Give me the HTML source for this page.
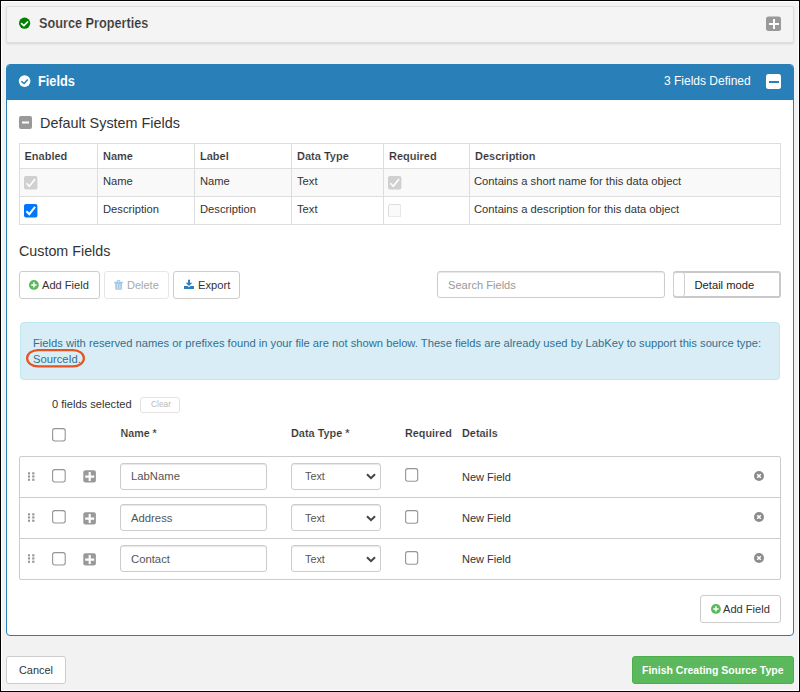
<!DOCTYPE html>
<html><head><meta charset="utf-8">
<style>
*{box-sizing:border-box}
html,body{margin:0;padding:0}
body{width:800px;height:692px;position:relative;overflow:hidden;background:#000;font-family:"Liberation Sans",sans-serif;color:#333}
.frame{position:absolute;left:1px;top:1px;width:798px;height:690px;background:#fff}
.page{position:absolute;left:2px;top:2px;width:796px;height:688px;background:#f2f2f2}
.a{position:absolute}
.t{position:absolute;white-space:nowrap;line-height:1}
.panel1{left:6px;top:6px;width:788px;height:37px;background:#f4f4f4;border:1px solid #dedede;border-radius:2px;box-shadow:0 1px 2px rgba(0,0,0,.12)}
.panel2{left:6px;top:64px;width:788px;height:572px;background:#fff;border:1px solid #2980b9;border-radius:4px;overflow:hidden}
.phead{position:absolute;left:0;top:0;width:100%;height:35px;background:#2980b9}
.tbl{left:19px;top:143px;width:762px;height:82px;border:1px solid #ddd}
.hl{position:absolute;height:1px;background:#ddd}
.vl{position:absolute;width:1px;background:#ddd}
.btn{position:absolute;background:#fff;border:1px solid #ccc;border-radius:3px}
.inp{position:absolute;background:#fff;border:1px solid #ccc;border-radius:3px;box-shadow:inset 0 1px 1px rgba(0,0,0,.1)}

</style></head><body>
<div class="frame"></div><div class="page"></div>
<div class="a panel1"></div>
<svg class="a" style="left:18px;top:17px" width="14" height="14" viewBox="0 0 14 14"><circle cx="6.6" cy="6.2" r="5.6" fill="#008000"/><path d="M3 6.2 L5.9 8.7 L10 4.5" stroke="#fff" stroke-width="1.7" fill="none"/></svg>
<div id="t_srcprop" class="t" style="left:39px;top:17px;font-size:12.7px;transform:scaleY(1.1);transform-origin:0 0;font-weight:bold;-webkit-text-stroke:0.18px #f4f4f4">Source Properties</div>
<svg class="a" style="left:766px;top:16px" width="15" height="15" viewBox="0 0 15 15"><rect x="0" y="0.5" width="15" height="14.5" rx="2.5" fill="#999"/><path d="M8 3 V13 M3 8 H13" stroke="#fff" stroke-width="2"/></svg>
<div class="a panel2"><div class="phead"></div></div>
<svg class="a" style="left:18px;top:75px" width="14" height="14" viewBox="0 0 14 14"><circle cx="6.6" cy="6.1" r="5.85" fill="#fff"/><path d="M3.3 6.3 L6.2 8.5 L9.7 4.5" stroke="#2980b9" stroke-width="1.5" fill="none"/></svg>
<div id="t_fields" class="t" style="left:38px;top:75.3px;font-size:12.8px;transform:scaleY(1.11);transform-origin:0 0;font-weight:bold;color:#fff">Fields</div>
<div id="t_3fields" class="t" style="left:664px;top:75px;font-size:12px;color:#fff">3 Fields Defined</div>
<svg class="a" style="left:766px;top:74px" width="15" height="15" viewBox="0 0 15 15"><rect x="0" y="0" width="15" height="15" rx="2.5" fill="#fff"/><path d="M3 8 H13" stroke="#2980b9" stroke-width="2"/></svg>
<svg class="a" style="left:19px;top:116px" width="13" height="13" viewBox="0 0 13 13"><rect x="0" y="0" width="13" height="13" rx="2" fill="#999"/><path d="M3 6.5 H10" stroke="#fff" stroke-width="2"/></svg>
<div id="t_dsf" class="t" style="left:40px;top:116px;font-size:14.4px">Default System Fields</div>
<div class="a tbl"></div>
<div class="a" style="left:20px;top:169px;width:760px;height:27px;background:#f9f9f9"></div>
<div class="hl" style="left:20px;top:168px;width:760px"></div>
<div class="hl" style="left:20px;top:196px;width:760px"></div>
<div class="vl" style="left:97px;top:144px;height:80px"></div>
<div class="vl" style="left:194px;top:144px;height:80px"></div>
<div class="vl" style="left:291px;top:144px;height:80px"></div>
<div class="vl" style="left:383px;top:144px;height:80px"></div>
<div class="vl" style="left:469px;top:144px;height:80px"></div>
<div id="t_h_en" class="t" style="left:24.5px;top:151px;font-size:11.0px;font-weight:bold;-webkit-text-stroke:0.15px #fff">Enabled</div>
<div id="t_h_name" class="t" style="left:103px;top:151px;font-size:11.0px;font-weight:bold;-webkit-text-stroke:0.15px #fff">Name</div>
<div id="t_h_label" class="t" style="left:200px;top:151px;font-size:11.0px;font-weight:bold;-webkit-text-stroke:0.15px #fff">Label</div>
<div id="t_h_dt" class="t" style="left:297px;top:151px;font-size:11.0px;font-weight:bold;-webkit-text-stroke:0.15px #fff">Data Type</div>
<div id="t_h_req" class="t" style="left:389px;top:151px;font-size:11.0px;font-weight:bold;-webkit-text-stroke:0.15px #fff">Required</div>
<div id="t_h_desc" class="t" style="left:475px;top:151px;font-size:11.0px;font-weight:bold;-webkit-text-stroke:0.15px #fff">Description</div>
<div id="t_r1_name" class="t" style="left:103px;top:176px;font-size:11.2px">Name</div>
<div id="t_r1_label" class="t" style="left:200px;top:176px;font-size:11.2px">Name</div>
<div id="t_r1_dt" class="t" style="left:297px;top:176px;font-size:11.2px">Text</div>
<div id="t_r1_desc" class="t" style="left:474px;top:176px;font-size:11.2px">Contains a short name for this data object</div>
<div id="t_r2_name" class="t" style="left:103px;top:204px;font-size:11.2px">Description</div>
<div id="t_r2_label" class="t" style="left:200px;top:204px;font-size:11.2px">Description</div>
<div id="t_r2_dt" class="t" style="left:297px;top:204px;font-size:11.2px">Text</div>
<div id="t_r2_desc" class="t" style="left:474px;top:204px;font-size:11.2px">Contains a description for this data object</div>
<svg class="a" style="left:24px;top:176px" width="14" height="14" viewBox="0 0 14 14"><rect x="0" y="0" width="13.4" height="13.5" rx="2" fill="#d0d0d0"/><path d="M2.4 7.2 L5.3 10.2 L11.1 2.9" stroke="#fff" stroke-width="1.6" fill="none"/></svg>
<svg class="a" style="left:24px;top:204px" width="14" height="14" viewBox="0 0 14 14"><rect x="0" y="0" width="13.4" height="13.6" rx="2" fill="#0075ff"/><path d="M2.4 7.2 L5.3 10.2 L11.1 2.9" stroke="#fff" stroke-width="2" fill="none"/></svg>
<svg class="a" style="left:388px;top:176px" width="14" height="14" viewBox="0 0 14 14"><rect x="0" y="0" width="13.4" height="13.5" rx="2" fill="#d0d0d0"/><path d="M2.4 7.2 L5.3 10.2 L11.1 2.9" stroke="#fff" stroke-width="1.6" fill="none"/></svg>
<svg class="a" style="left:388px;top:204px" width="13" height="13" viewBox="0 0 13 13"><rect x="0.5" y="0.5" width="12.4" height="12.5" rx="2" fill="#fafafa" stroke="#dcdcdc"/></svg>
<div id="t_cf" class="t" style="left:19px;top:244px;font-size:14.3px">Custom Fields</div>
<div class="btn" style="left:19px;top:271px;width:81px;height:28px"></div>
<svg class="a" style="left:29.4px;top:280px" width="11" height="11" viewBox="0 0 11 11"><circle cx="4.9" cy="4.95" r="4.9" fill="#5cb85c"/><path d="M4.9 2.3 V7.6 M2.2 4.95 H7.6" stroke="#fff" stroke-width="1.5"/></svg>
<div id="t_addf" class="t" style="left:42px;top:280px;font-size:11.1px">Add Field</div>
<div class="btn" style="left:104px;top:271px;width:65px;height:28px;border-color:#e6e6e6"></div>
<svg class="a" style="left:114px;top:280px" width="10" height="10" viewBox="0 0 10 10"><path d="M3.2 2 V0.6 H5.8 V2" stroke="#a3c7e6" stroke-width="1" fill="none"/><rect x="0.2" y="1.8" width="8.8" height="1.3" fill="#a3c7e6"/><path d="M1.1 3.1 H8.1 L7.8 9.8 H1.4 Z" fill="#a3c7e6"/><path d="M3.3 4 V8.8 M5.9 4 V8.8" stroke="#e9f2fa" stroke-width="0.8"/></svg>
<div id="t_del" class="t" style="left:127px;top:280px;font-size:11px;color:#a8a8a8">Delete</div>
<div class="btn" style="left:173px;top:271px;width:67px;height:28px"></div>
<svg class="a" style="left:184px;top:279px" width="10" height="10" viewBox="0 0 10 10"><rect x="4" y="0.7" width="2" height="3.6" fill="#2a7fc1"/><path d="M1.6 3.8 H8.4 L5 7 Z" fill="#2a7fc1"/><path d="M0 7 H3.6 L5 8.2 L6.4 7 H10 V10 H0 Z" fill="#2a7fc1"/></svg>
<div id="t_exp" class="t" style="left:198px;top:280px;font-size:11.2px">Export</div>
<div class="inp" style="left:437px;top:271px;width:228px;height:27px"></div>
<div id="t_search" class="t" style="left:448px;top:280px;font-size:11.1px;color:#999">Search Fields</div>
<div class="a" style="left:673px;top:271px;width:108px;height:27px;border:2px solid #c9c9c9;border-left-width:1px;border-radius:3px;background:#fff"></div>
<div class="a" style="left:673px;top:272px;width:12px;height:25px;border:1px solid #cfcfcf;border-radius:3px;background:#fff"></div>
<div id="t_detail" class="t" style="left:694.5px;top:280px;font-size:11.2px;color:#222">Detail mode</div>
<div class="a" style="left:20px;top:322px;width:760px;height:58px;background:#d9edf7;border:1px solid #bce8f1;border-radius:4px"></div>
<div id="t_al1" class="t" style="left:33px;top:338px;font-size:11.2px;color:#31708f">Fields with reserved names or prefixes found in your file are not shown below. These fields are already used by LabKey to support this source type:</div>
<div id="t_al2" class="t" style="left:33px;top:354px;font-size:11.2px;color:#31708f">SourceId.</div>
<svg class="a" style="left:25px;top:348px" width="62" height="21" viewBox="0 0 62 21"><rect x="2.1" y="2.1" width="56.8" height="16.3" rx="11" ry="8.1" fill="none" stroke="#e5541e" stroke-width="2.2"/></svg>
<div id="t_sel" class="t" style="left:52px;top:399px;font-size:11.1px">0 fields selected</div>
<div class="btn" style="left:140px;top:397px;width:40px;height:16px;border-color:#e3e3e3"></div>
<div id="t_clear" class="t" style="left:151px;top:400px;font-size:8.4px;color:#bbb">Clear</div>
<svg class="a" style="left:52px;top:428px" width="15" height="15" viewBox="0 0 15 15"><rect x="0.6" y="0.6" width="12.6" height="12.4" rx="2.2" fill="#fff" stroke="#959595" stroke-width="1.1"/></svg>
<div id="t_fh_name" class="t" style="left:120.5px;top:428px;font-size:10.7px;font-weight:bold;-webkit-text-stroke:0.15px #fff">Name *</div>
<div id="t_fh_dt" class="t" style="left:291px;top:428px;font-size:10.9px;font-weight:bold;-webkit-text-stroke:0.15px #fff">Data Type *</div>
<div id="t_fh_req" class="t" style="left:405px;top:428px;font-size:10.8px;font-weight:bold;-webkit-text-stroke:0.15px #fff">Required</div>
<div id="t_fh_det" class="t" style="left:462px;top:428px;font-size:10.9px;font-weight:bold;-webkit-text-stroke:0.15px #fff">Details</div>
<div class="a" style="left:19px;top:456px;width:762px;height:124px;border:1px solid #ccc;border-radius:2px;background:#fff"></div>
<div class="a" style="left:20px;top:497px;width:760px;height:1px;background:#ccc"></div>
<div class="a" style="left:20px;top:538px;width:760px;height:1px;background:#ccc"></div>
<svg class="a" style="left:28px;top:472px" width="7" height="9" viewBox="0 0 7 9"><g fill="#949494"><rect x="0" y="0.3" width="2" height="2.1"/><rect x="0" y="3.4" width="2" height="2.1"/><rect x="0" y="6.7" width="2" height="2.1"/><rect x="4.2" y="0.3" width="2.2" height="2.1"/><rect x="4.2" y="3.4" width="2.2" height="2.1"/><rect x="4.2" y="6.7" width="2.2" height="2.1"/></g></svg>
<svg class="a" style="left:52px;top:469px" width="15" height="15" viewBox="0 0 15 15"><rect x="0.6" y="0.6" width="12.6" height="12.4" rx="2.2" fill="#fff" stroke="#959595" stroke-width="1.1"/></svg>
<svg class="a" style="left:83px;top:470px" width="13" height="13" viewBox="0 0 13 13"><rect x="0.3" y="0.2" width="12.6" height="12.4" rx="2" fill="#999"/><path d="M6.7 2 V11 M2.2 6.6 H11.2" stroke="#fff" stroke-width="2.1"/></svg>
<div class="inp" style="left:120px;top:463px;width:147px;height:27px"></div>
<div id="t_fn0" class="t" style="left:131px;top:471px;font-size:11.3px;color:#555">LabName</div>
<div class="inp" style="left:291px;top:463px;width:90px;height:27px"></div>
<div id="t_ft0" class="t" style="left:305px;top:471px;font-size:10.8px;color:#555">Text</div>
<svg class="a" style="left:366px;top:473px" width="10" height="7" viewBox="0 0 10 7"><path d="M1 1.2 L5 5.2 L9 1.2" stroke="#444" stroke-width="2" fill="none"/></svg>
<svg class="a" style="left:405px;top:468px" width="15" height="15" viewBox="0 0 15 15"><rect x="0.6" y="0.6" width="12.1" height="12.6" rx="2.2" fill="#fff" stroke="#959595" stroke-width="1.1"/></svg>
<div id="t_fd0" class="t" style="left:462px;top:472px;font-size:11px">New Field</div>
<svg class="a" style="left:754px;top:471px" width="10" height="10" viewBox="0 0 10 10"><circle cx="5" cy="5" r="5" fill="#8c8c8c"/><path d="M3.2 3.2 L6.8 6.8 M6.8 3.2 L3.2 6.8" stroke="#fff" stroke-width="1.5"/></svg>
<svg class="a" style="left:28px;top:513px" width="7" height="9" viewBox="0 0 7 9"><g fill="#949494"><rect x="0" y="0.3" width="2" height="2.1"/><rect x="0" y="3.4" width="2" height="2.1"/><rect x="0" y="6.7" width="2" height="2.1"/><rect x="4.2" y="0.3" width="2.2" height="2.1"/><rect x="4.2" y="3.4" width="2.2" height="2.1"/><rect x="4.2" y="6.7" width="2.2" height="2.1"/></g></svg>
<svg class="a" style="left:52px;top:510px" width="15" height="15" viewBox="0 0 15 15"><rect x="0.6" y="0.6" width="12.6" height="12.4" rx="2.2" fill="#fff" stroke="#959595" stroke-width="1.1"/></svg>
<svg class="a" style="left:83px;top:512px" width="13" height="13" viewBox="0 0 13 13"><rect x="0.3" y="0.2" width="12.6" height="12.4" rx="2" fill="#999"/><path d="M6.7 2 V11 M2.2 6.6 H11.2" stroke="#fff" stroke-width="2.1"/></svg>
<div class="inp" style="left:120px;top:504px;width:147px;height:27px"></div>
<div id="t_fn1" class="t" style="left:131px;top:513px;font-size:11.3px;color:#555">Address</div>
<div class="inp" style="left:291px;top:504px;width:90px;height:27px"></div>
<div id="t_ft1" class="t" style="left:305px;top:513px;font-size:10.8px;color:#555">Text</div>
<svg class="a" style="left:366px;top:515px" width="10" height="7" viewBox="0 0 10 7"><path d="M1 1.2 L5 5.2 L9 1.2" stroke="#444" stroke-width="2" fill="none"/></svg>
<svg class="a" style="left:405px;top:510px" width="15" height="15" viewBox="0 0 15 15"><rect x="0.6" y="0.6" width="12.1" height="12.6" rx="2.2" fill="#fff" stroke="#959595" stroke-width="1.1"/></svg>
<div id="t_fd1" class="t" style="left:462px;top:513px;font-size:11px">New Field</div>
<svg class="a" style="left:754px;top:512px" width="10" height="10" viewBox="0 0 10 10"><circle cx="5" cy="5" r="5" fill="#8c8c8c"/><path d="M3.2 3.2 L6.8 6.8 M6.8 3.2 L3.2 6.8" stroke="#fff" stroke-width="1.5"/></svg>
<svg class="a" style="left:28px;top:554px" width="7" height="9" viewBox="0 0 7 9"><g fill="#949494"><rect x="0" y="0.3" width="2" height="2.1"/><rect x="0" y="3.4" width="2" height="2.1"/><rect x="0" y="6.7" width="2" height="2.1"/><rect x="4.2" y="0.3" width="2.2" height="2.1"/><rect x="4.2" y="3.4" width="2.2" height="2.1"/><rect x="4.2" y="6.7" width="2.2" height="2.1"/></g></svg>
<svg class="a" style="left:52px;top:552px" width="15" height="15" viewBox="0 0 15 15"><rect x="0.6" y="0.6" width="12.6" height="12.4" rx="2.2" fill="#fff" stroke="#959595" stroke-width="1.1"/></svg>
<svg class="a" style="left:83px;top:553px" width="13" height="13" viewBox="0 0 13 13"><rect x="0.3" y="0.2" width="12.6" height="12.4" rx="2" fill="#999"/><path d="M6.7 2 V11 M2.2 6.6 H11.2" stroke="#fff" stroke-width="2.1"/></svg>
<div class="inp" style="left:120px;top:545px;width:147px;height:27px"></div>
<div id="t_fn2" class="t" style="left:131px;top:554px;font-size:11.3px;color:#555">Contact</div>
<div class="inp" style="left:291px;top:545px;width:90px;height:27px"></div>
<div id="t_ft2" class="t" style="left:305px;top:554px;font-size:10.8px;color:#555">Text</div>
<svg class="a" style="left:366px;top:556px" width="10" height="7" viewBox="0 0 10 7"><path d="M1 1.2 L5 5.2 L9 1.2" stroke="#444" stroke-width="2" fill="none"/></svg>
<svg class="a" style="left:405px;top:551px" width="15" height="15" viewBox="0 0 15 15"><rect x="0.6" y="0.6" width="12.1" height="12.6" rx="2.2" fill="#fff" stroke="#959595" stroke-width="1.1"/></svg>
<div id="t_fd2" class="t" style="left:462px;top:554px;font-size:11px">New Field</div>
<svg class="a" style="left:754px;top:553px" width="10" height="10" viewBox="0 0 10 10"><circle cx="5" cy="5" r="5" fill="#8c8c8c"/><path d="M3.2 3.2 L6.8 6.8 M6.8 3.2 L3.2 6.8" stroke="#fff" stroke-width="1.5"/></svg>
<div class="btn" style="left:700px;top:595px;width:81px;height:28px"></div>
<svg class="a" style="left:710.6px;top:604px" width="11" height="11" viewBox="0 0 11 11"><circle cx="4.9" cy="4.95" r="4.9" fill="#5cb85c"/><path d="M4.9 2.3 V7.6 M2.2 4.95 H7.6" stroke="#fff" stroke-width="1.5"/></svg>
<div id="t_addf2" class="t" style="left:723px;top:604px;font-size:11.1px">Add Field</div>
<div class="btn" style="left:6px;top:656px;width:60px;height:28px"></div>
<div id="t_cancel" class="t" style="left:19px;top:665px;font-size:10.9px">Cancel</div>
<div class="a" style="left:632px;top:656px;width:162px;height:28px;background:#5cb85c;border:1px solid #4cae4c;border-radius:3px"></div>
<div id="t_finish" class="t" style="left:642px;top:665px;font-size:10.5px;font-weight:bold;color:#fff">Finish Creating Source Type</div>
</body></html>
